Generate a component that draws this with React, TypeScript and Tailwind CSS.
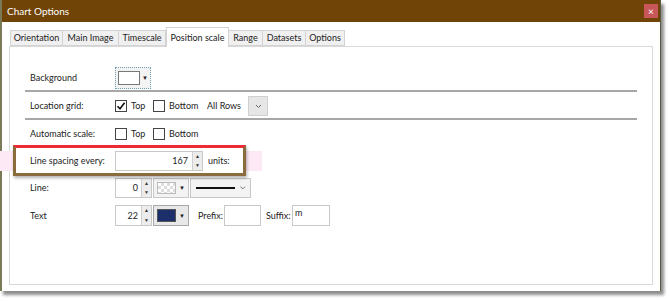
import React from 'react';

const font = { fontFamily: 'Lato, "Open Sans", sans-serif' };

const tabs: [string, number][] = [
  ['Orientation', 53],
  ['Main Image', 56],
  ['Timescale', 47],
  ['Position scale', 63],
  ['Range', 34],
  ['Datasets', 43],
  ['Options', 39],
];

const Check: React.FC<{ checked?: boolean; label: string; w: number }> = ({ checked, label, w }) => (
  <div className="flex items-center gap-[4px]" style={{ width: w }}>
    <div className="w-[12px] h-[12px] border border-[#444] bg-white flex items-center justify-center">
      {checked && (
        <svg width="10" height="10" viewBox="0 0 10 10">
          <path d="M1.5 5.2 L4 7.8 L8.6 1.8" fill="none" stroke="#111" strokeWidth="1.6" />
        </svg>
      )}
    </div>
    <span>{label}</span>
  </div>
);

const Spinner: React.FC = () => (
  <div className="w-[10px] h-full flex flex-col border-l border-[#d0d0d0] bg-[#ececec]">
    <div className="flex-1 flex items-center justify-center text-[5px] leading-none text-[#333]">▲</div>
    <div className="flex-1 flex items-center justify-center text-[5px] leading-none text-[#333]">▼</div>
  </div>
);

const Arrow: React.FC = () => <span className="text-[6px] leading-none text-[#222]">▼</span>;

const Separator: React.FC = () => <div className="ml-[15px] w-[612px] h-[2px] bg-[#a7a7a7]" />;

export default function App() {
  return (
    <div className="w-[670px] h-[301px] bg-white text-[9px] text-[#222] overflow-hidden" style={font}>
      <div className="w-[661px] h-[291px] flex flex-col shadow-[3px_4px_3px_rgba(0,0,0,0.45)] border-l-2 border-[#7b7a58] border-r border-r-[#5a5a40] bg-white">
        {/* title bar */}
        <div className="h-[22px] bg-[#704406] flex items-center justify-between pl-[5px] pr-[2px] shrink-0">
          <span className="text-white text-[10px]">Chart Options</span>
          <div className="w-[14px] h-[14px] bg-[#c8565a] flex items-center justify-center text-white text-[10px] leading-none">×</div>
        </div>

        {/* tabs */}
        <div className="flex items-end pl-[8px] pt-[5px] h-[24px] shrink-0">
          {tabs.map(([t, w]) =>
            t === 'Position scale' ? (
              <div key={t} style={{ width: w }} className="h-[20px] border border-b-0 border-[#d3d3d3] bg-white flex items-center justify-center -mb-px relative z-10">
                {t}
              </div>
            ) : (
              <div key={t} style={{ width: w }} className="h-[16px] border border-[#d3d3d3] border-l-0 first:border-l bg-[#f0f0f0] flex items-center justify-center">
                {t}
              </div>
            )
          )}
        </div>

        {/* panel */}
        <div className="ml-[7px] w-[644px] h-[239px] border border-[#d9d9d9] bg-white flex flex-col">
          {/* Background */}
          <div className="mt-[19px] h-[23px] flex items-center">
            <span className="ml-[20px] w-[85px]">Background</span>
            <div className="w-[36px] h-[22px] border border-dotted border-[#6fa0b0] bg-[#f3f3f3] flex items-center px-[2px] gap-[2px]">
              <div className="w-[24px] h-[14px] bg-white border border-[#777]" />
              <Arrow />
            </div>
          </div>
          <div className="mt-[1px]" />
          <Separator />

          {/* Location grid */}
          <div className="mt-[4px] h-[20px] flex items-center">
            <span className="ml-[20px] w-[85px]">Location grid:</span>
            <Check checked label="Top" w={38} />
            <Check label="Bottom" w={54} />
            <span className="w-[41px]">All Rows</span>
            <div className="w-[20px] h-[20px] bg-[#e6e6e6] border border-[#cfcfcf] flex items-center justify-center">
              <svg width="7" height="5" viewBox="0 0 7 5">
                <path d="M1 1 L3.5 3.5 L6 1" fill="none" stroke="#666" strokeWidth="1" />
              </svg>
            </div>
          </div>
          <div className="mt-[2px]" />
          <Separator />

          {/* Automatic scale */}
          <div className="mt-[7px] h-[13px] flex items-center">
            <span className="ml-[20px] w-[85px]">Automatic scale:</span>
            <Check label="Top" w={38} />
            <Check label="Bottom" w={54} />
          </div>

          {/* Line spacing (highlighted) */}
          <div className="relative mt-[5px] h-[32px] -ml-[10px]">
            <div className="absolute left-0 top-[6px] w-[262px] h-[20px] bg-[#fde8f6]" />
            <div className="absolute left-[13px] top-0 w-[233px] h-[31px] border-[3px] border-[#8a6b3d] border-t-[#ec2b36] shadow-[1px_2px_3px_rgba(0,0,0,0.3)] bg-white" />
            <div className="absolute inset-0 flex items-center">
              <span className="ml-[30px] w-[85px]">Line spacing every:</span>
              <div className="w-[88px] h-[20px] border border-[#c8c8c8] bg-white flex">
                <div className="flex-1 flex items-center justify-end pr-[4px]">167</div>
                <Spinner />
              </div>
              <span className="ml-[5px]">units:</span>
            </div>
          </div>

          {/* Line */}
          <div className="mt-[1px] h-[20px] flex items-center">
            <span className="ml-[20px] w-[85px]">Line:</span>
            <div className="w-[37px] h-[20px] border border-[#c8c8c8] flex">
              <div className="flex-1 flex items-center justify-end pr-[3px]">0</div>
              <Spinner />
            </div>
            <div className="ml-[1px] w-[36px] h-[20px] border border-[#c8c8c8] bg-[#f3f3f3] flex items-center px-[3px] gap-[3px]">
              <div className="w-[22px] h-[12px] border border-[#bbb] bg-[linear-gradient(45deg,#ddd_25%,transparent_25%,transparent_75%,#ddd_75%),linear-gradient(45deg,#ddd_25%,transparent_25%,transparent_75%,#ddd_75%)] bg-[length:6px_6px] bg-[position:0_0,3px_3px] bg-white" />
              <Arrow />
            </div>
            <div className="ml-[1px] w-[61px] h-[20px] border border-[#c8c8c8] bg-[#f3f3f3] flex items-center pl-[5px] pr-[4px] gap-[5px]">
              <div className="w-[43px] h-[2px] bg-[#111]" />
              <svg width="6" height="4" viewBox="0 0 6 4">
                <path d="M0.5 0.5 L3 3 L5.5 0.5" fill="none" stroke="#666" strokeWidth="1" />
              </svg>
            </div>
          </div>

          {/* Text */}
          <div className="mt-[7px] h-[21px] flex items-center">
            <span className="ml-[20px] w-[85px]">Text</span>
            <div className="w-[37px] h-[21px] border border-[#c8c8c8] flex">
              <div className="flex-1 flex items-center justify-end pr-[3px]">22</div>
              <Spinner />
            </div>
            <div className="ml-[1px] w-[36px] h-[21px] border border-[#a8a8a8] bg-[#e8e8e8] flex items-center px-[3px] gap-[3px]">
              <div className="w-[22px] h-[13px] border border-[#555] bg-[#1d2f6a]" />
              <Arrow />
            </div>
            <span className="ml-[9px] w-[26px]">Prefix:</span>
            <div className="w-[37px] h-[21px] border border-[#c8c8c8]" />
            <span className="ml-[5px] w-[26px]">Suffix:</span>
            <div className="w-[38px] h-[21px] border border-[#c8c8c8] pl-[2px] leading-[13px]">m</div>
          </div>
        </div>
      </div>
    </div>
  );
}
